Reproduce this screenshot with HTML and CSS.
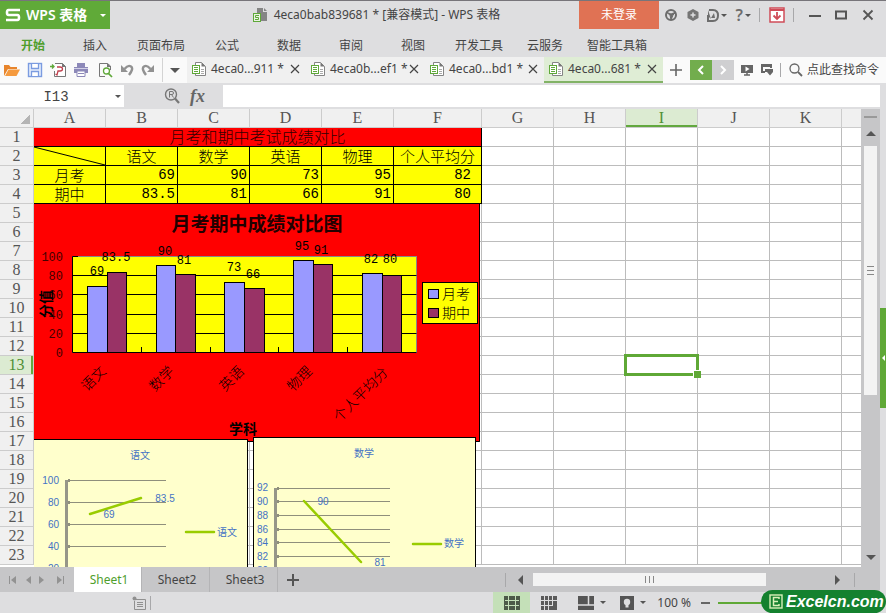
FILE: index.html
```
<!DOCTYPE html>
<html lang="zh-CN">
<head>
    <meta charset="UTF-8">
    <meta name="viewport" content="width=device-width, initial-scale=1.0">
    <title>4eca0bab839681 - WPS 表格</title>
    <link rel="stylesheet" href="styles.css">
</head>
<body>
    <svg class="defs" aria-hidden="true">
        <symbol id="doc" viewBox="0 0 16 16">
            <path d="M4.500 1.500h6l4 4v9h-10z" fill="#fff" stroke="#858585"/>
            <path d="M10.500 1.500v4h4z" fill="#777"/>
            <path d="M10 8.500h3M10 10.500h3M10 12.500h3" stroke="#aaa"/>
            <rect x="1.500" y="4.500" width="7" height="8" fill="#fff" stroke="#5fa839"/>
            <path d="M3 6.500h4M3 8.500h4M3 10.500h4" stroke="#5fa839"/>
        </symbol>
        <symbol id="cross" viewBox="0 0 10 10">
            <path d="M1 1l8 8M9 1l-8 8" stroke="#444" stroke-width="1.200"/>
        </symbol>
    </svg>

    <header class="title-bar">
        <button class="app-btn">
            <svg width="16" height="14" viewBox="0 0 16 14"><path d="M15 2H3.500Q2 2 2 4.500T3.500 7H12.500Q14 7 14 9.500T12.500 12H1" fill="none" stroke="#fff" stroke-width="2.600"/></svg>
            <span>WPS 表格</span>
            <i class="caret light"></i>
        </button>
        <div class="doc-title">
            <svg width="15" height="15" viewBox="0 0 15 15">
                <path d="M4 0h6v4h4v9H4z" fill="#858585"/><path d="M11 0l3 3h-3z" fill="#858585"/>
                <rect x="0.500" y="5.500" width="7" height="8" fill="#e9f3e2" stroke="#5fa839"/>
                <path d="M6 7.500H2.500v2h3v2H2" fill="none" stroke="#5fa839"/>
            </svg>
            <span>4eca0bab839681 * [兼容模式] - WPS 表格</span>
        </div>
        <button class="login-btn">未登录</button>
        <div class="window-tools">
            <button aria-label="皮肤"><svg width="14" height="14" viewBox="0 0 14 14"><circle cx="7" cy="7" r="5" fill="none" stroke="#6d6d6d" stroke-width="2"/><path d="M2 4l5 2 5-2-3 3-2 5-1-5z" fill="#6d6d6d" stroke="#6d6d6d"/></svg></button>
            <button aria-label="应用"><svg width="12" height="14" viewBox="0 0 12 14"><path d="M6 1l5.500 3v6L6 13 .5 10V4z" fill="#757575"/><path d="M6 4.500v5M3.500 7h5" stroke="#dedee0" stroke-width="1.500"/></svg></button>
            <button class="with-caret" aria-label="文档"><svg width="12" height="13" viewBox="0 0 12 13"><path d="M2 1h4q5 0 5 5.500T6 12H1V6" fill="none" stroke="#6d6d6d" stroke-width="2"/><path d="M1 1v6l3 3zM4 9l3-5 1 5z" fill="#6d6d6d"/></svg><i class="caret"></i></button>
            <button class="with-caret" aria-label="帮助"><span class="help">?</span><i class="caret"></i></button>
            <i class="sep"></i>
            <button aria-label="折叠"><svg width="16" height="16" viewBox="0 0 16 16"><rect x="1" y="1" width="14" height="14" fill="#fff" stroke="#d04c58" stroke-width="1.500"/><path d="M1 3h14" stroke="#d04c58" stroke-width="2"/><path d="M8 5v7M4.500 8.500L8 12l3.500-3.500" fill="none" stroke="#d04c58" stroke-width="1.800"/></svg></button>
            <i class="sep"></i>
            <button class="win" aria-label="最小化"><svg width="12" height="12" viewBox="0 0 12 12"><path d="M0 7h12" stroke="#555" stroke-width="2"/></svg></button>
            <button class="win" aria-label="最大化"><svg width="12" height="12" viewBox="0 0 12 12"><path d="M1 2.500h10v7H1z" fill="none" stroke="#555" stroke-width="2"/></svg></button>
            <button class="win" aria-label="关闭"><svg width="12" height="12" viewBox="0 0 12 12"><path d="M1.500 1.500l9 9M10.500 1.500l-9 9" stroke="#555" stroke-width="1.800"/></svg></button>
        </div>
    </header>

    <nav class="menu">
        <a href="#" class="current">开始</a>
        <a href="#">插入</a>
        <a href="#">页面布局</a>
        <a href="#">公式</a>
        <a href="#">数据</a>
        <a href="#">审阅</a>
        <a href="#">视图</a>
        <a href="#">开发工具</a>
        <a href="#">云服务</a>
        <a href="#">智能工具箱</a>
    </nav>

    <div class="toolbar">
        <div class="quick">
            <button aria-label="打开"><svg width="16" height="14" viewBox="0 0 16 14"><path d="M0 13V2h5l1.500 2H13v2H4z" fill="#e8852c"/><path d="M4.500 6.500H16L12.500 13H1z" fill="#f59a3e"/></svg></button>
            <button aria-label="保存"><svg width="16" height="16" viewBox="0 0 16 16"><rect x="1.500" y="1.500" width="13" height="13" fill="#e8effc" stroke="#7b9be0" stroke-width="1.400"/><path d="M4.500 2v4.500h7V2M4.500 14V9.500h7V14" fill="#fff" stroke="#7b9be0" stroke-width="1.300"/></svg></button>
            <button aria-label="输出为PDF"><svg width="16" height="16" viewBox="0 0 16 16"><path d="M5 1.500h7.500l3 3v10H4.500V9" fill="#fff" stroke="#777"/><path d="M12 1v4h4z" fill="#777"/><path d="M7 5h3q2.500 0 2.500 2t-2.500 2H8l-1 4-1.500-1" fill="none" stroke="#c0404e" stroke-width="1.300"/><path d="M0 4.500h4M2 2.500l2 2-2 2" fill="none" stroke="#5fa839" stroke-width="1.300"/></svg></button>
            <button aria-label="打印"><svg width="16" height="16" viewBox="0 0 16 16"><path d="M4 1h8v4H4z" fill="#8c88b8"/><path d="M1 5h14v6H1z" fill="#8c88b8"/><path d="M4 9h8v5.500H4z" fill="#fff" stroke="#8c88b8"/><path d="M1 6.500h14" stroke="#d2d0e6"/><path d="M5 11.500h6" stroke="#8c88b8"/></svg></button>
            <button aria-label="打印预览"><svg width="16" height="16" viewBox="0 0 16 16"><path d="M13.500 8V4l-3-2.500h-8v13H8" fill="none" stroke="#777"/><path d="M10 1v4h4z" fill="#777"/><circle cx="9.500" cy="9" r="3" fill="#fff" stroke="#5fa839" stroke-width="1.300"/><path d="M11.500 11.500l3.500 3.500" stroke="#5fa839" stroke-width="1.700"/></svg></button>
            <button aria-label="撤销"><svg width="14" height="14" viewBox="0 0 14 14"><path d="M4.500 6Q8 1.500 11 3.500T9 12" fill="none" stroke="#929292" stroke-width="2.400"/><path d="M1 2v7h7z" fill="#929292"/></svg></button>
            <button aria-label="重做"><svg width="14" height="14" viewBox="0 0 14 14"><path d="M9.500 6Q6 1.500 3 3.500T5 12" fill="none" stroke="#929292" stroke-width="2.400"/><path d="M13 2v7H6z" fill="#929292"/></svg></button>
            <i class="sep"></i>
            <button aria-label="更多"><i class="caret wide"></i></button>
        </div>
        <div class="doc-tabs">
            <div class="doc-tab"><svg width="16" height="16"><use href="#doc"/></svg><span>4eca0...911 *</span><button aria-label="关闭标签"><svg width="10" height="10"><use href="#cross"/></svg></button></div>
            <div class="doc-tab"><svg width="16" height="16"><use href="#doc"/></svg><span>4eca0b...ef1 *</span><button aria-label="关闭标签"><svg width="10" height="10"><use href="#cross"/></svg></button></div>
            <div class="doc-tab"><svg width="16" height="16"><use href="#doc"/></svg><span>4eca0...bd1 *</span><button aria-label="关闭标签"><svg width="10" height="10"><use href="#cross"/></svg></button></div>
            <div class="doc-tab active"><svg width="16" height="16"><use href="#doc"/></svg><span>4eca0...681 *</span><button aria-label="关闭标签"><svg width="10" height="10"><use href="#cross"/></svg></button></div>
        </div>
        <div class="tab-tools">
            <button aria-label="新建"><svg width="12" height="12" viewBox="0 0 12 12"><path d="M6 0v12M0 6h12" stroke="#666" stroke-width="1.600"/></svg></button>
            <div class="pager">
                <button class="prev" aria-label="上一个"><svg width="8" height="10" viewBox="0 0 8 10"><path d="M6 1L2 5l4 4" fill="none" stroke="#fff" stroke-width="2"/></svg></button>
                <button class="next" aria-label="下一个"><svg width="8" height="10" viewBox="0 0 8 10"><path d="M2 1l4 4-4 4" fill="none" stroke="#fff" stroke-width="2"/></svg></button>
            </div>
            <button aria-label="播放"><svg width="12" height="12" viewBox="0 0 12 12"><path d="M0 1h12v8H0z" fill="#666"/><path d="M4.500 2.500v5L8.500 5z" fill="#fff"/><path d="M6 9v2M3 11h6" stroke="#666" stroke-width="1.500"/></svg></button>
            <button aria-label="窗口"><svg width="12" height="12" viewBox="0 0 12 12"><path d="M1 9V1h9v3M1 2h9M1 8h3" fill="none" stroke="#666" stroke-width="2"/><path d="M4 5h8v3l-3 3.500L6 8H4z" fill="#666"/></svg></button>
            <i class="sep"></i>
            <button class="search"><svg width="14" height="14" viewBox="0 0 14 14"><circle cx="5.500" cy="5.500" r="4.500" fill="none" stroke="#666" stroke-width="1.300"/><path d="M9 9l4 4" stroke="#666" stroke-width="1.800"/></svg>点此查找命令</button>
        </div>
    </div>

    <div class="formula-bar">
        <div class="name-box">
            <input type="text" value="I13" aria-label="名称框">
            <button aria-label="名称列表"><i class="caret"></i></button>
        </div>
        <div class="fx">
            <button aria-label="浏览公式"><svg width="16" height="16" viewBox="0 0 16 16"><circle cx="7" cy="6.500" r="5.500" fill="none" stroke="#777" stroke-width="1.400"/><path d="M11 10.500l4 4.500" stroke="#777" stroke-width="2.200"/><path d="M5.500 9.500v-6H8q1.500 0 1.500 1.500T8 6.500H5.500M7.500 6.500l2 3" fill="none" stroke="#777"/></svg></button>
            <button class="fx-btn">fx</button>
        </div>
        <input class="formula-input" type="text" aria-label="编辑栏">
    </div>

    <main class="work">
        <div class="sheet">
            <table class="grid">
                <colgroup>
                    <col class="col-head"><col><col><col><col><col><col class="col-wide"><col><col><col><col><col><col>
                </colgroup>
                <thead>
                    <tr><th class="corner"></th><th>A</th><th>B</th><th>C</th><th>D</th><th>E</th><th>F</th><th>G</th><th>H</th><th class="picked">I</th><th>J</th><th>K</th><th></th></tr>
                </thead>
                <tbody id="rows">
                    <tr><th>1</th><td class="banner" colspan="6">月考和期中考试成绩对比</td><td></td><td></td><td></td><td></td><td></td><td></td></tr>
                    <tr class="names"><th>2</th><td><svg class="slash" viewBox="0 0 71 18" preserveAspectRatio="none"><path d="M0 0L71 18" stroke="#000"/></svg></td><td>语文</td><td>数学</td><td>英语</td><td>物理</td><td>个人平均分</td><td></td><td></td><td></td><td></td><td></td><td></td></tr>
                    <tr class="marks"><th>3</th><td>月考</td><td>69</td><td>90</td><td>73</td><td>95</td><td>82</td><td></td><td></td><td></td><td></td><td></td><td></td></tr>
                    <tr class="marks"><th>4</th><td>期中</td><td>83.5</td><td>81</td><td>66</td><td>91</td><td>80</td><td></td><td></td><td></td><td></td><td></td><td></td></tr>
                </tbody>
            </table>

            <svg class="chart chart-main" width="446" height="238" viewBox="0 0 446 238">
                <rect width="446" height="238" fill="#f00"/>
                <path d="M445.500 0V237.500H0" fill="none" stroke="#000"/>
                <text class="chart-title" x="223" y="27">月考期中成绩对比图</text>
                <rect x="38.500" y="52.500" width="344" height="96" fill="#ff0" stroke="#888"/>
                <path d="M38.500 71.500h344M38.500 90.500h344M38.500 110.500h344M38.500 129.500h344" stroke="#000"/>
                <path d="M44 52.500h-5.500v96h344M107.500 143v5M176.500 143v5M244.500 143v5M313.500 143v5" fill="none" stroke="#000"/>
                <g fill="#99f" stroke="#000">
                    <rect x="53.500" y="82.500" width="20" height="66"/>
                    <rect x="122.500" y="61.500" width="19" height="87"/>
                    <rect x="190.500" y="78.500" width="20" height="70"/>
                    <rect x="259.500" y="56.500" width="20" height="92"/>
                    <rect x="328.500" y="69.500" width="20" height="79"/>
                </g>
                <g fill="#936" stroke="#000">
                    <rect x="73.500" y="68.500" width="19" height="80"/>
                    <rect x="141.500" y="70.500" width="20" height="78"/>
                    <rect x="210.500" y="84.500" width="20" height="64"/>
                    <rect x="279.500" y="60.500" width="19" height="88"/>
                    <rect x="348.500" y="71.500" width="19" height="77"/>
                </g>
                <g class="num mid">
                    <text x="63" y="71">69</text><text x="82" y="57">83.5</text>
                    <text x="131" y="51">90</text><text x="150" y="60">81</text>
                    <text x="200" y="67">73</text><text x="219" y="74">66</text>
                    <text x="268" y="46">95</text><text x="287" y="50">91</text>
                    <text x="337" y="59">82</text><text x="356" y="59">80</text>
                </g>
                <g class="num end">
                    <text x="29" y="57">100</text><text x="29" y="76">80</text><text x="29" y="95">60</text>
                    <text x="29" y="115">40</text><text x="29" y="134">20</text><text x="29" y="153">0</text>
                </g>
                <g class="cat mid">
                    <text transform="translate(63 178) rotate(-45)">语文</text>
                    <text transform="translate(131 178) rotate(-45)">数学</text>
                    <text transform="translate(201 178) rotate(-45)">英语</text>
                    <text transform="translate(269 178) rotate(-45)">物理</text>
                    <text transform="translate(330 194) rotate(-45)">个人平均分</text>
                </g>
                <g class="axis-title mid">
                    <text transform="translate(17 100) rotate(-90)">分值</text>
                    <text x="209" y="230">学科</text>
                </g>
                <rect x="388.500" y="78.500" width="55" height="41" fill="#ff0" stroke="#000"/>
                <rect x="394.500" y="85.500" width="10" height="9" fill="#99f" stroke="#000"/>
                <rect x="394.500" y="104.500" width="10" height="9" fill="#936" stroke="#000"/>
                <g class="cat"><text x="408" y="95">月考</text><text x="408" y="114">期中</text></g>
            </svg>

            <svg class="chart chart-a" width="214" height="160" viewBox="0 0 214 160">
                <rect x="-1" y="0.500" width="214.500" height="170" fill="#ffc" stroke="#000"/>
                <path d="M33 41.500h99M33 63.500h99M33 85.500h99M33 107.500h99M33 129.500h99" stroke="#8f8f7c"/>
                <path d="M32.500 41v120" stroke="#969688" stroke-width="3"/>
                <path d="M34 41.500h2M34 63.500h2M34 85.500h2M34 107.500h2" stroke="#8f8f7c" stroke-width="3"/>
                <path d="M56 75L107 59M152 93h28" stroke="#9c0" stroke-width="2.500" stroke-linecap="round"/>
                <g class="small mid"><text x="106" y="20">语文</text><text x="75" y="79">69</text><text x="131" y="63">83.5</text></g>
                <g class="small end"><text x="25" y="45">100</text><text x="25" y="67">80</text><text x="25" y="89">60</text><text x="25" y="111">40</text><text x="25" y="133">20</text></g>
                <text class="small" x="183" y="97">语文</text>
            </svg>

            <svg class="chart chart-b" width="223" height="162" viewBox="0 0 223 162">
                <rect x="0.500" y="0.500" width="222" height="170" fill="#ffc" stroke="#000"/>
                <path d="M23 51.500h114M23 64.500h114M23 78.500h114M23 92.500h114M23 105.500h114M23 119.500h114M23 133.500h114" stroke="#8f8f7c"/>
                <path d="M22.500 51v120" stroke="#969688" stroke-width="3"/>
                <path d="M24 51.500h2M24 64.500h2M24 78.500h2M24 92.500h2M24 105.500h2M24 119.500h2" stroke="#8f8f7c" stroke-width="3"/>
                <path d="M51 64L108 125M160 107h28" stroke="#9c0" stroke-width="2.500" stroke-linecap="round"/>
                <g class="small mid"><text x="111" y="20">数学</text><text x="70" y="68">90</text><text x="127" y="129">81</text></g>
                <g class="small end"><text x="15" y="54">92</text><text x="15" y="68">90</text><text x="15" y="82">88</text><text x="15" y="96">86</text><text x="15" y="109">84</text><text x="15" y="123">82</text><text x="15" y="137">80</text></g>
                <text class="small" x="191" y="110">数学</text>
            </svg>
        </div>
        <div class="v-scroll">
            <i class="split"></i>
            <i class="arrow up"></i>
            <div class="track"><div class="thumb"><i></i><i></i><i></i></div></div>
            <i class="arrow down"></i>
        </div>
        <div class="gutter"><button aria-label="展开侧栏"></button></div>
    </main>

    <div class="sheet-bar">
        <div class="sheet-nav">
            <svg width="60" height="10" viewBox="0 0 60 10" fill="#929292"><path d="M0 1h1v8H0zM7 1v8L2 5zM22 1v8l-5-4zM30 1v8l5-4zM48 1v8l5-4zM54 1h1v8h-1z"/></svg>
        </div>
        <button class="sheet-tab active">Sheet1</button>
        <button class="sheet-tab">Sheet2</button>
        <button class="sheet-tab">Sheet3</button>
        <button class="add-sheet" aria-label="新建工作表"><svg width="12" height="12" viewBox="0 0 12 12"><path d="M6 0v12M0 6h12" stroke="#555" stroke-width="2"/></svg></button>
        <div class="h-scroll">
            <i class="sep"></i>
            <i class="arrow left"></i>
            <div class="track"><div class="thumb"><i></i><i></i><i></i></div></div>
            <i class="arrow right"></i>
            <i class="sep"></i>
        </div>
    </div>

    <footer class="status">
        <div class="status-left">
            <svg width="14" height="14" viewBox="0 0 14 14"><path d="M3 3.500h10.500v10H2.500V5" fill="none" stroke="#909090"/><circle cx="2.500" cy="2.500" r="2" fill="#909090"/><path d="M5 6.500h6M5 8.500h6M5 10.500h6" stroke="#909090"/></svg>
            <i class="sep"></i>
        </div>
        <button class="view on" aria-label="普通视图"><svg width="16" height="14" viewBox="0 0 16 14"><path d="M0 0h16v14H0z" fill="#4c5a48"/><path d="M1 4.500h14M1 9.500h14M4.500 0v14M11.500 0v14" stroke="#c4e0b8"/></svg></button>
        <button class="view" aria-label="分页预览"><svg width="16" height="14" viewBox="0 0 16 14"><path d="M0 0h16v14H0z" fill="#5a5a5a"/><path d="M0 4.500h16M0 9.500h12M3.500 0v14M7.500 0v14M11.500 0v9" stroke="#dededf"/></svg></button>
        <button class="view" aria-label="阅读布局"><svg width="16" height="14" viewBox="0 0 16 14"><path d="M0 0h16v14H0z" fill="#555"/><path d="M0 9h16M10.500 0v9" stroke="#dededf" stroke-width="1.500"/></svg><i class="caret"></i></button>
        <button class="view" aria-label="护眼模式"><svg width="14" height="14" viewBox="0 0 14 14"><path d="M0 0h14v14H0z" fill="#555"/><circle cx="7" cy="6" r="3.200" fill="#dededf"/><path d="M5.500 8h3v3.500h-3z" fill="#dededf"/></svg><i class="caret"></i></button>
        <span class="zoom">100 %</span>
        <button class="minus" aria-label="缩小"></button>
        <div class="zoom-line"></div>
    </footer>

    <a class="site-badge" href="#">
        <svg width="14" height="15" viewBox="0 0 14 15"><rect x="1" y="1" width="12" height="13" fill="#14812f" stroke="#d9f0b8" stroke-width="1.400"/><path d="M10 5V3.500H4.500v8H10V10M5 7.500h4" fill="none" stroke="#d9f0b8" stroke-width="1.500"/></svg>
        Excelcn.com
    </a>

    <script>
        // empty part of the grid
        const rows = document.getElementById('rows');
        for (let n = 5; n <= 23; n++) {
            const tr = rows.insertRow();
            const th = document.createElement('th');
            th.textContent = n;
            tr.appendChild(th);
            for (let c = 0; c < 12; c++) {
                const td = tr.insertCell();
                if (n === 13 && c === 8) {
                    td.className = 'cursor';
                    th.className = 'picked';
                }
            }
        }
    </script>
</body>
</html>
```
FILE: styles.css
```
* {
    box-sizing: border-box;
}

body {
    margin: 0;
    height: 100vh;
    display: flex;
    flex-direction: column;
    overflow: hidden;
    position: relative;
    background-color: #dedee0;
    color: #444;
    font-family: "Noto Sans", "Noto Sans CJK SC", sans-serif;
    font-size: 12px;
    line-height: 16px;
}

button, input {
    margin: 0;
    padding: 0;
    border: none;
    background: none;
    color: inherit;
    font: inherit;
}

a {
    color: inherit;
    text-decoration: none;
}

svg {
    flex: none;
}

.defs {
    position: absolute;
    width: 0;
    height: 0;
}

.caret {
    display: inline-block;
    width: 0;
    border: 3px solid transparent;
    border-top-color: #555;
    border-bottom: none;
}

.caret.light {
    border-top-color: #fff;
}

.caret.wide {
    border-width: 5px;
    border-bottom: none;
}

.sep {
    width: 1px;
    height: 14px;
    background-color: #a8a8aa;
}

/* title bar */
.title-bar {
    height: 29px;
    display: flex;
    align-items: stretch;
    border-top: 1px solid #77757a;
}

.app-btn {
    width: 110px;
    padding: 0 4px 0 5px;
    display: flex;
    align-items: center;
    gap: 5px;
    background-color: #60aa38;
    color: #fff;
    font-size: 14px;
    font-weight: 600;
}

.app-btn .caret {
    margin-left: auto;
}

.doc-title {
    flex: 1;
    display: flex;
    align-items: center;
    justify-content: center;
    gap: 6px;
    padding-left: 64px;
    white-space: nowrap;
}

.login-btn {
    width: 80px;
    background-color: #e07254;
    color: #fff;
}

.window-tools {
    width: 227px;
    padding: 0 12px 0 5px;
    display: flex;
    align-items: center;
    justify-content: space-between;
}

.window-tools button {
    display: flex;
    align-items: center;
    gap: 2px;
}

.window-tools .win {
    margin-left: 6px;
}

.help {
    font-size: 16px;
    font-weight: 600;
    color: #6d6d6d;
}

/* menu */
.menu {
    height: 28px;
    padding: 0 2px;
    display: flex;
    align-items: center;
}

.menu a {
    min-width: 62px;
    padding: 5px 11px 0;
    text-align: center;
    white-space: nowrap;
}

.menu .current {
    color: #4f9e2c;
    font-weight: bold;
}

/* toolbar */
.toolbar {
    height: 26px;
    display: flex;
    background-color: #fafafa;
}

.quick {
    width: 187px;
    padding: 0 7px 0 4px;
    display: flex;
    align-items: center;
    justify-content: space-between;
}

.quick button,
.tab-tools button {
    display: flex;
    align-items: center;
}

.quick .sep {
    height: 24px;
    background-color: #d4d4d4;
}

.doc-tabs {
    flex: 1;
    display: flex;
    background-color: #f0f0f0;
}

.doc-tab {
    flex: 1;
    max-width: 119px;
    padding: 0 6px 0 4px;
    display: flex;
    align-items: center;
    border-bottom: 2px solid transparent;
    white-space: nowrap;
}

.doc-tab span {
    flex: 1;
    margin-left: 4px;
}

.doc-tab button {
    display: flex;
}

.doc-tab.active {
    background-color: #dfedd5;
    border-bottom-color: #82b366;
}

.tab-tools {
    width: 223px;
    padding: 0 7px;
    display: flex;
    align-items: center;
    justify-content: space-between;
}

.pager {
    display: flex;
}

.pager button {
    width: 22px;
    height: 20px;
    justify-content: center;
}

.prev {
    background-color: #72ad4d;
}

.next {
    background-color: #cfcfd1;
}

.search {
    gap: 4px;
    white-space: nowrap;
}

/* formula bar */
.formula-bar {
    height: 26px;
    padding: 2px 6px 2px 0;
    display: flex;
}

.name-box {
    width: 124px;
    display: flex;
    background-color: #fff;
}

.name-box input {
    flex: 1;
    min-width: 0;
    padding-top: 2px;
    text-align: center;
    font-family: "Liberation Mono", monospace;
    font-size: 14px;
}

.name-box button {
    width: 12px;
}

.name-box .caret {
    display: block;
    margin-left: 3px;
}

.fx {
    width: 99px;
    padding: 0 18px 0 40px;
    display: flex;
    align-items: center;
    justify-content: space-between;
}

.fx button {
    display: flex;
}

.fx-btn {
    font-family: "Liberation Serif", serif;
    font-size: 18px;
    font-style: italic;
    font-weight: bold;
    color: #666;
}

.formula-input {
    flex: 1;
    background-color: #fff;
}

/* sheet */
.work {
    flex: 1;
    min-height: 0;
    display: flex;
}

.sheet {
    flex: 1;
    position: relative;
    overflow: hidden;
    background-color: #fff;
}

.grid {
    width: 914px;
    table-layout: fixed;
    border-collapse: separate;
    border-spacing: 0;
    color: #000;
}

.col-head {
    width: 34px;
}

.col-wide {
    width: 88px;
}

.grid tr {
    height: 19px;
}

.grid th,
.grid td {
    height: 19px;
    padding: 0;
    border: solid #bcbcbc;
    border-width: 0 1px 1px 0;
    line-height: 18px;
    white-space: nowrap;
}

.grid th {
    background-color: #f0f0f0;
    color: #555;
    font-family: "Liberation Serif", serif;
    font-size: 16px;
    font-weight: normal;
    border-color: #ccc;
}

.grid .corner {
    background-image: linear-gradient(135deg, transparent 50%, #b4b4b4 50%);
    background-size: 10px 10px;
    background-position: 20px 5px;
    background-repeat: no-repeat;
}

.grid .picked {
    background-color: #dcebd2;
    color: #4f8f35;
}

thead .picked {
    box-shadow: inset 0 -2px #62a83e;
}

tbody .picked {
    box-shadow: inset -2px 0 #62a83e;
}

.grid .banner {
    background-color: #f00;
    border-color: #000;
    color: #300;
    font-size: 16px;
    font-weight: 300;
    text-align: center;
}

.names td:nth-child(-n+7),
.marks td:nth-child(-n+7) {
    background-color: #ff0;
    border-color: #000;
    font-size: 15px;
    font-weight: 300;
    text-align: center;
}

.marks td:nth-child(n+3):nth-child(-n+7) {
    padding: 1px 2px 0 0;
    font-family: "Liberation Mono", monospace;
    font-size: 14px;
    line-height: 17px;
    text-align: right;
}

.marks td:nth-child(7):nth-child(-n+7) {
    padding-right: 10px;
}

.slash {
    display: block;
    width: 100%;
    height: 18px;
}

.grid .cursor {
    position: relative;
}

.cursor::before {
    content: "";
    position: absolute;
    inset: -2px;
    border: 3px solid #5fa836;
}

.cursor::after {
    content: "";
    position: absolute;
    right: -4px;
    bottom: -4px;
    width: 7px;
    height: 7px;
    background-color: #5fa836;
    border: solid #fff;
    border-width: 1px 0 0 1px;
}

/* charts float over the cells */
.chart {
    position: absolute;
    font-family: "Noto Sans CJK SC", sans-serif;
}

.chart-main {
    left: 34px;
    top: 95px;
}

.chart-a {
    left: 34px;
    top: 330px;
}

.chart-b {
    left: 253px;
    top: 328px;
}

.mid,
.chart-title {
    text-anchor: middle;
}

.end {
    text-anchor: end;
}

.chart-title {
    fill: #200;
    font-size: 19px;
    font-weight: bold;
}

.num {
    font-family: "Liberation Mono", monospace;
    font-size: 12px;
}

.end.num {
    fill: #400;
}

.cat {
    font-size: 14px;
    font-weight: 300;
}

.axis-title {
    font-size: 14px;
    font-weight: bold;
}

.small {
    fill: #4472c4;
    font-family: "Liberation Sans", "Noto Sans CJK SC", sans-serif;
    font-size: 10px;
}

/* scrollbars */
.v-scroll {
    width: 19px;
    padding: 7px 3px;
    display: flex;
    flex-direction: column;
    align-items: center;
    background-color: #c6c6c8;
}

.split {
    width: 13px;
    height: 2px;
    background-color: #999;
}

.arrow {
    border: 5px solid transparent;
}

.arrow.up {
    margin: 13px 0 10px;
    border-top: none;
    border-bottom-color: #555;
}

.arrow.down {
    border-bottom: none;
    border-top-color: #555;
}

.arrow.left {
    border-left: none;
    border-right-color: #555;
}

.arrow.right {
    border-right: none;
    border-left-color: #555;
}

.v-scroll .track {
    flex: 1;
    width: 13px;
}

.thumb {
    display: flex;
    align-items: center;
    justify-content: center;
    gap: 3px;
    background-color: #f3f3f3;
}

.v-scroll .thumb {
    height: 61%;
    flex-direction: column;
}

.v-scroll .thumb i {
    width: 7px;
    height: 1px;
    background-color: #888;
}

.gutter {
    width: 6px;
}

.gutter button {
    display: flex;
    align-items: center;
    width: 6px;
    height: 100px;
    margin-top: 199px;
    background-color: #5fa836;
}

.gutter button::before {
    content: "";
    margin-left: 2px;
    border: 3px solid transparent;
    border-left: none;
    border-right-color: #fff;
}

/* sheet tabs */
.sheet-bar {
    height: 25px;
    margin-right: 6px;
    display: flex;
    align-items: stretch;
    background-color: #c6c6c8;
}

.sheet-nav {
    width: 74px;
    padding-left: 9px;
    display: flex;
    align-items: center;
}

.sheet-tab {
    width: 68px;
    border-right: 1px solid #b4b4b6;
    padding-left: 3px;
}

.sheet-tab.active {
    background-color: #fff;
    color: #4f9e2c;
}

.add-sheet {
    width: 30px;
    display: flex;
    align-items: center;
    justify-content: center;
}

.h-scroll {
    width: 375px;
    margin-left: auto;
    padding-right: 25px;
    display: flex;
    align-items: center;
}

.h-scroll .arrow.left {
    margin: 0 10px 0 12px;
}

.h-scroll .arrow.right {
    margin-right: 14px;
}

.h-scroll .track {
    flex: 1;
}

.h-scroll .thumb {
    width: 77%;
    height: 13px;
}

.h-scroll .thumb i {
    width: 1px;
    height: 7px;
    background-color: #888;
}

/* status bar */
.status {
    height: 21px;
    display: flex;
    align-items: stretch;
    padding-right: 124px;
}

.status-left {
    flex: 1;
    padding-left: 132px;
    display: flex;
    align-items: center;
    gap: 4px;
}

.view {
    height: 21px;
    padding: 0 5px;
    display: flex;
    align-items: center;
    justify-content: center;
    gap: 6px;
}

.view.on {
    width: 37px;
    margin-right: 6px;
    background-color: #c4e0b8;
}

.view + .view + .view {
    margin-left: 11px;
}

.view + .view + .view + .view {
    margin-left: 4px;
}

.zoom {
    margin: 3px 10px 0 6px;
}

.minus {
    width: 9px;
    height: 2px;
    margin: 10px 8px 0 0;
    background-color: #666;
}

.zoom-line {
    width: 44px;
    height: 2px;
    margin-top: 10px;
    background-color: #5fa836;
}

.site-badge {
    position: absolute;
    right: 0;
    bottom: 0;
    width: 125px;
    height: 23px;
    padding-left: 8px;
    display: flex;
    align-items: center;
    gap: 3px;
    border-radius: 12px;
    background-color: #14812f;
    color: #fff;
    font-family: "Liberation Sans", sans-serif;
    font-size: 16px;
    font-style: italic;
    font-weight: bold;
    white-space: nowrap;
}
```
